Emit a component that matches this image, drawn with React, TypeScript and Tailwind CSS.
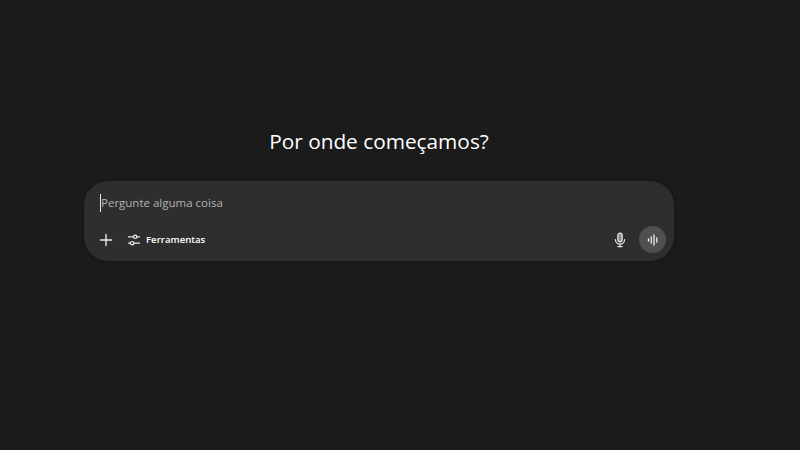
import React from "react";

export default function App() {
  return (
    <div className="w-[800px] h-[450px] overflow-hidden bg-[#1b1b1b] flex flex-col items-center pt-[126px] pr-[42px] font-['Open_Sans','Noto_Sans',sans-serif]">
      <h1 className="text-[20.8px] leading-[30px] font-normal text-white whitespace-nowrap">Por onde começamos?</h1>
      <div className="mt-[25px] w-[590px] h-[80px] rounded-[24px] bg-[#2e2e2e] shadow-[0_0_3px_rgba(0,0,0,0.4)] flex flex-col pl-[15px] pr-[8px]">
        <div className="mt-[12px] h-[19px] flex items-center pl-px">
          <span className="w-px h-[18px] bg-[#e8e8e8]"></span>
          <span className="text-[11.5px] leading-[19px] text-[#b4b4b4] whitespace-nowrap">Pergunte alguma coisa</span>
        </div>
        <div className="mt-[14px] flex items-center">
          <svg width="14" height="14" viewBox="0 0 14 14" fill="none" stroke="#f0f0f0" strokeWidth="1.3" strokeLinecap="round">
            <path d="M7 1.5v11M1.5 7h11" />
          </svg>
          <svg className="ml-[14px]" width="14" height="14" viewBox="0 0 14 14" fill="none" stroke="#ececec" strokeWidth="1.2" strokeLinecap="round">
            <path d="M1.5 3.8h5M10 3.8h2.5M1.5 10.2h2M7 10.2h5.5" />
            <circle cx="8.2" cy="3.8" r="1.7" />
            <circle cx="5.2" cy="10.2" r="1.7" />
          </svg>
          <span className="ml-[5px] text-[9.6px] leading-[16px] font-semibold text-white whitespace-nowrap">Ferramentas</span>
          <svg className="ml-auto" width="14" height="16" viewBox="0 0 14 16" fill="none" stroke="#e8e8e8" strokeWidth="1.2" strokeLinecap="round">
            <rect x="4.8" y="1.2" width="4.4" height="8.6" rx="2.2" fill="#8a8a8a" />
            <path d="M2.4 7.6a4.6 4.6 0 0 0 9.2 0M7 12.4V14.6M5 14.6h4" />
          </svg>
          <div className="ml-[12px] w-[27px] h-[27px] rounded-full bg-[#505050] flex items-center justify-center">
            <svg width="12" height="12" viewBox="0 0 12 12" fill="none" stroke="#f0f0f0" strokeWidth="1.3" strokeLinecap="round">
              <path d="M1.5 5v2M4.2 3v6M7 1v10M9.8 4v4" />
            </svg>
          </div>
        </div>
      </div>
    </div>
  );
}
